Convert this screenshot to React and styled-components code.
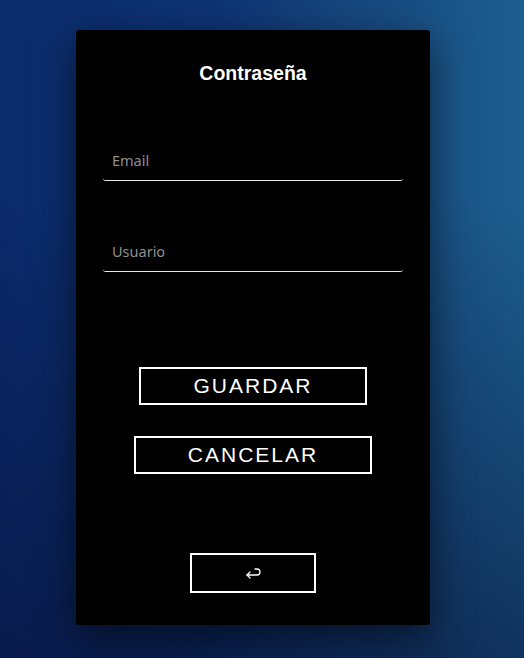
import styled, { createGlobalStyle } from 'styled-components';

const GlobalStyle = createGlobalStyle`
  html, body {
    margin: 0;
    padding: 0;
  }
  body {
    min-height: 658px;
    background:
      linear-gradient(180deg, rgba(6, 14, 50, 0) 30%, rgba(6, 14, 50, 0.55) 100%),
      linear-gradient(90deg, #0b2a6b 0%, #0e3374 40%, #17497f 70%, #1d5f8f 100%);
    font-family: 'Liberation Sans', Arial, sans-serif;
  }
`;

const Page = styled.div`
  display: flex;
  justify-content: center;
  padding: 30px 18px 0 0;
  height: 628px;
`;

const Card = styled.div`
  width: 354px;
  height: 595px;
  box-sizing: border-box;
  background: #000;
  border-radius: 3px;
  box-shadow: 0 12px 40px rgba(0, 0, 0, 0.55);
  display: flex;
  flex-direction: column;
  align-items: center;
  padding: 31px 0 32px;
`;

const Title = styled.h2`
  margin: 0;
  font-family: 'Liberation Sans', Arial, sans-serif;
  font-size: 19.5px;
  line-height: 24px;
  font-weight: 700;
  color: #fff;
`;

const Form = styled.div`
  display: flex;
  flex-direction: column;
  gap: 50px;
  margin-top: 55px;
  width: 300px;
`;

const Input = styled.input`
  width: 100%;
  height: 41px;
  box-sizing: border-box;
  background: transparent;
  border: none;
  border-bottom: 1px solid #e8e8e8;
  border-radius: 0 0 3px 3px;
  padding: 0 9px;
  font-family: 'Noto Sans', 'Open Sans', sans-serif;
  font-size: 14.5px;
  color: #fff;
  outline: none;

  &::placeholder {
    color: #8f8f8f;
  }
`;

const Actions = styled.div`
  display: flex;
  flex-direction: column;
  align-items: center;
  gap: 31px;
  margin-top: 95px;
`;

const Button = styled.button`
  height: 38px;
  box-sizing: border-box;
  padding: 0 52px;
  background: #000;
  border: 2px solid #fff;
  color: #fff;
  font-family: 'Liberation Sans', Arial, sans-serif;
  font-size: 21px;
  letter-spacing: 2px;
  cursor: pointer;
`;

const BackButton = styled.button`
  margin-top: auto;
  width: 126px;
  height: 40px;
  background: #000;
  border: 2px solid #fff;
  display: flex;
  align-items: center;
  justify-content: center;
  cursor: pointer;
`;

export default function App() {
  return (
    <>
      <GlobalStyle />
      <Page>
        <Card>
          <Title>Contraseña</Title>
          <Form>
            <Input type="email" placeholder="Email" />
            <Input type="text" placeholder="Usuario" />
          </Form>
          <Actions>
            <Button>GUARDAR</Button>
            <Button>CANCELAR</Button>
          </Actions>
          <BackButton aria-label="Volver">
            <svg width="18" height="14" viewBox="0 0 18 14" fill="none" stroke="#fff" strokeWidth="1.3" strokeLinecap="round" strokeLinejoin="round">
              <path d="M11 3 h2 a3 3 0 0 1 0 6 H3" />
              <path d="M6 6 L3 9 L6 12" />
            </svg>
          </BackButton>
        </Card>
      </Page>
    </>
  );
}
